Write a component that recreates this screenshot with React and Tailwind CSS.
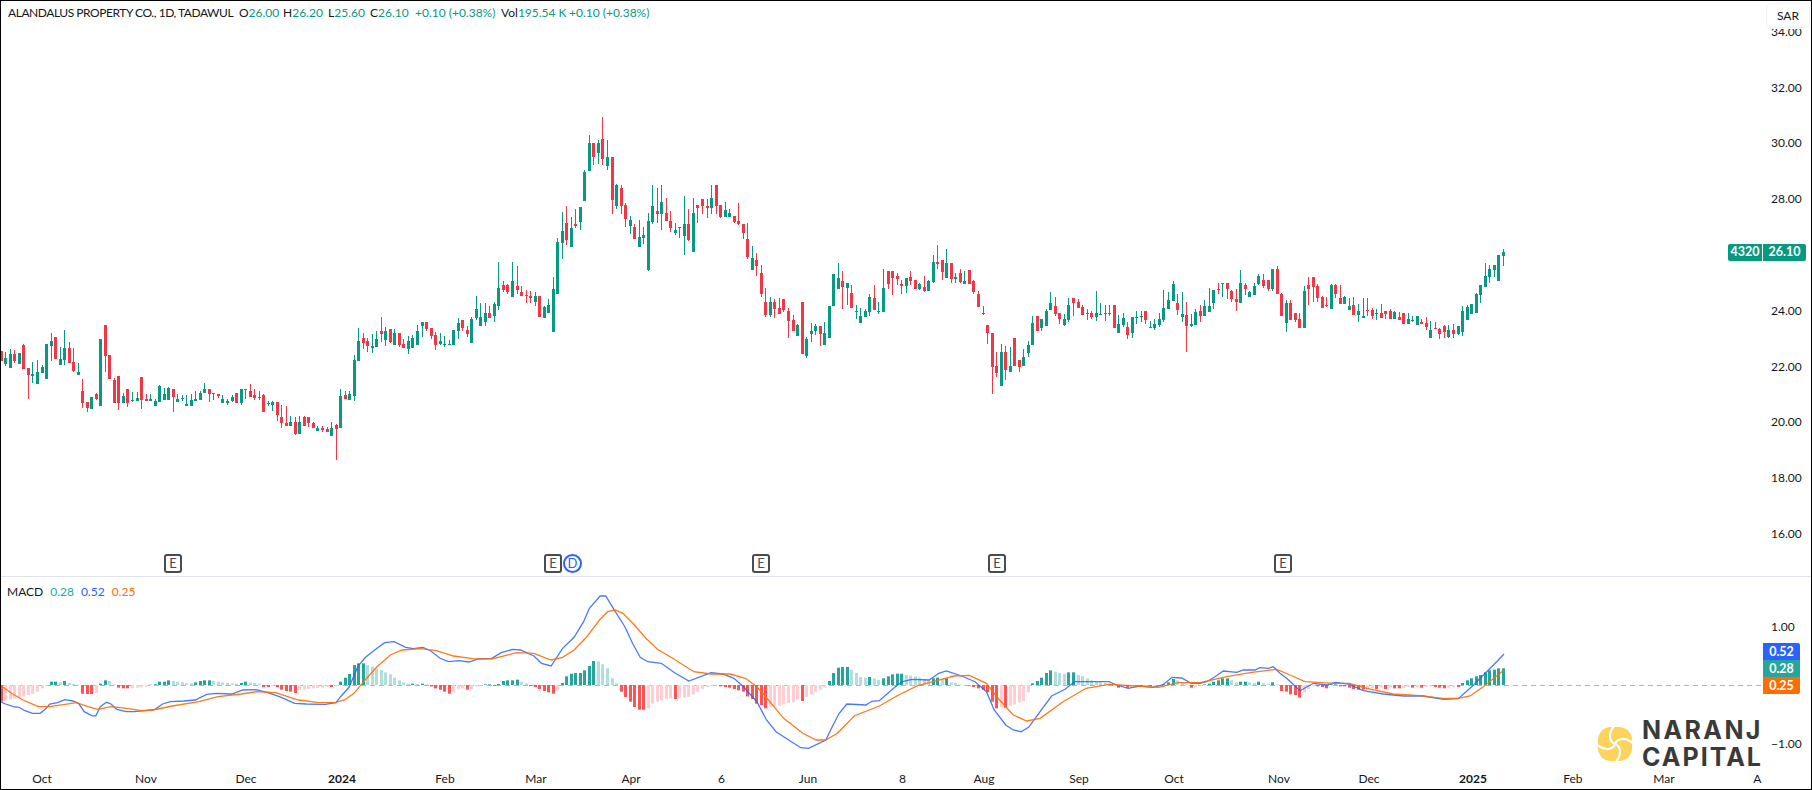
import React from "react"

const GREEN = "#089981"
const RED = "#f23645"

// candles read per crop: colour+bodyTop,bodyBottom,high,low (3x zoomed, missing wick = body edge)
const SECTIONS = [
  [270, "r243,273 g264,282,246,288 g252,294,237 r252,273,240,279 g249,282 r225,297,222 r294,315,,387 g312,318,276,339 g306,342,270 g291,309,285 g222,327 g213,228,189,273 r201,267 g267,285,231 g234,270,180,285 r234,279,216 r276,303,234,306 g306,315,279 r363,399,327,414 r396,414,,426 g381,417 r372,387,369,390 g207,408 r165,258,,306 r255,327 r330,399,324 r318,399,,420 g378,399,369 r357,399,,411 g390,393,366,396 g384,393,366 r321,390,,417 r387,393,372 g387,393,372 g393,408,387 g348,396,345 g372,390,354 g354,390,351 r357,381,,426 g387,396,372 g384,387,375,393 g402,408,375 g390,408,372 g387,393,363 g369,390,363 g357,369,339 r357,372,,396 g369,372,,390 r372,378,,384 g387,399,375 g393,399,387,405 g381,393,375,396 r369,399 g357,399,,405 r357,360,,387 r363,381,342 r375,384,357,390 r381,384,363,390 r375,426,372 g399,402,393,408 g396,405,393,423 r396,435,,453 r441,459,405,474 r459,468,408 g456,468,438 r456,492,441,495 g456,492,438 r441,468,438 r441,459,,471 r459,474,456 g474,483,468 r474,480,468,486 r477,486,471 g474,498,456 r465,477,462,570 g378,474,357 r375,387,363 g372,390,363 g270,378,255,393 g213,273,174 r204,219,189,237 r213,228,204,246 g228,234,192,249 g207,231,183 r183,192,141,216 g183,210,171,228 r177,216,,219 g189,225,177 r189,225,,231"],
  [100, "r732,744,717 g723,747,708,762 g714,744,705 g693,735,675 g666,678,,711 r666,687,,693 r684,708,,717 r705,735,696,750 g723,732,699,735 g732,735,708,741 g732,735,720 g690,735 g669,693,654,717 r660,684,,693 r690,702,678,711 g657,729,651 g627,654,588,660 g651,678,609 g639,666,609,678 r639,654,618 g612,648,606,666 g564,618,486,630 r555,570,543,576 r555,576,552,582 g543,591,486 r558,570,498,582 r576,588,558 r585,588,570,609 r588,594,573,609 g588,606,576,618 r588,651 g621,654,618 g615,639,597 g567,696,531 g426,582,414 g393,429,336,477 r369,420,318,435 g384,441,351 r372,378,327,384 g321,366,,390 g216,303,210 g129,213,105 r129,171,,195 g129,159,120,192 r117,177,51,195 g171,198,120,210 r171,300,,342 g255,318,252,327 r264,318,255,342 r315,357,309,381 g360,378,348,402 r381,417,372 g411,441,360 g405,414,381,432 g363,510,339,513 g318,366,255,372 r333,342,264,369 g306,342,255,390 r339,363,294 r363,384,333,396 g390,399,369,405 g381,384,,414 g372,408,288,465 r372,420,327,423 g339,456,294 r315,324,,369 r297,318,,342 r318,324,297,354 g294,324,255,342 r255,318,,342 r315,351,,354 g330,351,306 g339,351,327 r348,366,,369 r363,372,309,375 r372,399,,417 r417,471,369,477 g474,510,438 r480,498,459,528 r519,582,495,591 r606,645,564,651 g606,645,591,651 r606,627,597,654 r624,642,594 r597,630,,636 r633,663,624,714 r660,693,645 g675,708,672"],
  [220, "r246,402 g357,408,351,414 g333,342,309,366 g318,333,312,345 r318,342,,378 g339,375,306 g258,354 g162,258 g174,207,129 r183,201,153,267 g189,204,,255 r219,264,195 g273,276,255,297 g288,309,264 g273,291,267 g231,276,222,288 r234,270,195 g273,276,246,282 g204,276,147 r153,192,,207 r153,174,,225 r168,177,159,195 r192,198,180,222 g174,198,,219 r171,183,153,195 r180,207 g192,207,189,210 r201,213,168,216 g183,213,180 g126,186,105,189 r126,132,75,147 r120,156,,180 g129,174,87 r129,177,,189 g171,177,159,189 r159,186,147,189 g183,192,153 r150,192 r183,216,180,222 r222,261,213 g279,282,258,285 r315,339,,372 r339,441,,522 r438,459,396,471 g396,498,372 r396,450,378,480 g438,456,381 r354,438 r420,441,,456 g411,438,387 g375,399,363,411 g309,375,288 r288,333 g297,324,,333 g273,318,267 g249,270,216 r258,282,231,288 r279,297,,312 g297,315,282,318 g255,300,234,306 r234,249,,288 r246,264,237 r261,285,255 r279,282,267,300 r279,291,273,297 g279,291,213,303 g282,285,249 g279,282,255,303 r279,282,255,288 r255,324 g312,339,285 g294,315,279,321 r321,345,306,357 g291,339,,354 g291,294,273,312 g288,291,273,306 r273,300,,312 g321,324,303 g312,324,297,330 g297,315,279,321 g264,300,210,306 g240,267,216 g192,243,183 r249,270,222,285 g282,291,216,306 r285,318,246,396 g312,318,282,321 g276,315,267"],
  [230, "r243,258,225,276 g228,258,210 g228,246,174 g180,219,,237 r177,180,159,192 g159,162,,201 r159,177,,207 r183,207,180,216 r207,216,177,243 g159,219,120 r165,177,159,195 g186,201,183 g168,195,159 g138,162,132,165 r150,168,132,174 r150,177,,183 g117,177,,183 r117,192,108 r192,258,189 g219,279,210,306 r219,270,210 r249,270,,276 r267,294,249 g183,294,168 r165,177,141,225 r141,171,,216 r168,204,162,216 r201,234,198 r225,228,201,231 g165,237,162 r165,192,162,204 r204,222,165 g201,222,198 g228,240,204 r225,255,201 g243,255,222,276 g258,264,204 r240,243,204,258 r240,258,234,267 g249,252,237,270 r249,264,222 r243,252,,267 r243,267,237 g246,267,243 r261,270,246 r249,282 g267,282,249 g270,273,258,276 g258,285 r276,282,267 r279,291,261,300 g300,324,273 r294,297,276 r297,312,294,327 r288,306,285,324 g300,321,285,324 r300,312,282,324 g288,312,,315 g243,306,228,318 g231,270,225 g222,252 g192,249,189 g165,195,,219 g138,171,99 g117,141,105,159 g105,120,,141 g75,153 g66,78,57,108"],
]

const CANDLES = SECTIONS.flatMap(([off, s]) =>
  s.split(" ").map((t) => {
    const [top, bot, hi, lo] = t.slice(1).split(",").map(Number)
    return {
      color: t[0] === "g" ? GREEN : RED,
      top: off + top / 3,
      bot: off + bot / 3,
      hi: off + (hi || top) / 3,
      lo: off + (lo || bot) / 3,
    }
  })
)

const PITCH = 4.524
const barX = (i) => Math.round(1.3 + PITCH * i - 1.5)

// histogram heights per bar (3x zoomed, zero = 685)
const HIST = [
  -50,-47,-44,-41,-38,-34,-30,-27,-20,-10,-2,10,10,8,12,6,3,1,-26,-27,-27,-24,4,14,12,2,-8,-10,-10,-9,-8,-6,-5,1,2,
  10,10,14,12,10,8,6,5,8,12,14,14,12,10,8,6,5,4,6,10,8,6,4,-6,-6,-4,-6,-14,-18,-20,-24,-16,-14,-12,-10,-9,-8,-6,-6,-4,
  10,22,33,60,65,65,60,55,50,45,38,32,22,14,8,4,4,3,4,2,-4,-10,-14,-20,-26,-20,-12,-10,-14,-12,-4,-2,2,2,-3,3,
  12,14,14,16,10,5,-3,-6,-12,-18,-22,-26,-16,6,26,34,36,36,44,57,72,71,62,50,20,5,-20,
  -36,-50,-66,-74,-74,-70,-56,-50,-46,-42,-40,-42,-40,-38,-36,-28,-20,-12,-6,-3,-1,-4,-6,-8,-12,-16,-20,-34,-42,-56,-60,-70,
  -66,-64,-62,-58,-54,-52,-44,-48,-36,-28,-20,-14,-8,12,36,52,54,54,46,36,24,22,24,20,16,20,26,32,34,34,30,28,26,22,18,16,20,22,18,20,8,6,2,0,
  -2,-6,-10,-14,-22,-50,-70,-66,-68,-62,-58,-52,-48,-22,5,12,22,36,44,40,36,34,38,38,30,26,20,14,10,8,6,
  4,3,-8,-2,-8,-2,-3,-4,-2,-4,-3,-2,2,8,18,14,8,2,-8,-6,-4,2,4,10,14,20,20,14,8,10,10,8,6,10,6,4,8,2,
  -18,-20,-28,-30,-38,-22,-12,-4,-4,-6,-10,2,2,-4,-4,-8,-12,-14,-14,-12,-10,-12,-8,-12,-8,-10,-10,-8,-6,-8,-6,-8,-6,-4,-6,-8,-10,-8,-6,-6,
  6,14,20,26,30,38,44,46,50,50,
]

const histColor = (v, prev) => {
  if (v >= 0) return v >= prev ? "#26a69a" : "#b2dfdb"
  return v <= prev ? "#ff5252" : "#ffcdd2"
}

// line points per crop: [x scale, x offset, y offset, "z,z z,z ..."]
const toPoints = (parts) =>
  parts
    .flatMap(([sx, ox, oy, s]) =>
      s.split(" ").map((p) => {
        const [x, y] = p.split(",").map(Number)
        return `${(ox + x / sx).toFixed(1)},${(oy + y / 3).toFixed(1)}`
      })
    )
    .join(" ")

const MACD_LINE = toPoints([
  [2.613, 0, 550, "0,455 15,462 35,470 50,472 65,482 85,490 105,490 118,478 130,462 150,458 170,449 190,453 205,460 220,485 240,497 250,498 262,470 278,457 290,462 305,478 330,485 350,485 380,482 405,478 425,462 445,455 480,453 510,450 540,433 565,430 605,432 635,420 670,419 700,428 730,440 770,460 800,462 850,463 878,458 890,440 912,412 935,350 955,322 985,295 1005,278 1030,275 1060,292 1080,296 1105,292 1125,302 1150,325 1172,335 1200,332 1225,336 1250,327 1285,325 1310,308 1340,298 1360,300 1395,318 1415,340 1440,348 1470,295 1500,262 1525,215 1540,175 1568,138"],
  [2.613, 600, 550, "15,138 40,185 65,230 85,280 105,322 125,335 160,340 195,368 232,393 290,368 320,372 350,385 375,410 410,455 435,510 460,545 500,575 525,593 545,595 590,570 605,535 625,490 645,462 695,465 710,454 730,452 770,412 790,395 815,388 860,390 885,370 905,363 945,378 980,395 1010,425 1030,480 1060,525 1080,540 1100,545 1120,532 1150,485 1180,438 1215,418 1240,395 1330,395 1350,405 1380,415 1410,408 1445,412 1470,405 1495,382 1520,384 1545,400 1568,400"],
  [3, 1100, 620, "320,185 345,170 370,153 410,157 430,150 465,150 480,143 505,145 520,140 540,160 560,175 600,212 640,190 680,195 705,187 745,192 790,212 850,222 910,228 970,228 1030,238 1075,236 1120,196 1160,155 1190,125 1212,102"],
])

const SIGNAL_LINE = toPoints([
  [2.613, 0, 550, "0,405 30,430 60,450 100,470 130,470 170,463 200,458 230,470 255,478 290,470 330,475 370,482 400,480 450,468 520,455 570,440 630,432 670,425 720,428 780,450 830,457 875,458 900,450 925,430 950,395 985,350 1020,315 1050,300 1100,296 1140,302 1185,318 1235,326 1285,327 1350,308 1395,310 1440,330 1470,322 1500,300 1530,265 1568,208"],
  [2.613, 600, 550, "20,185 40,180 60,190 90,225 120,265 150,298 190,325 245,365 290,372 340,372 380,385 410,410 440,450 480,505 530,550 565,570 590,570 620,550 665,497 730,468 780,435 830,407 880,392 925,378 965,376 1010,400 1040,445 1080,495 1115,513 1150,505 1210,455 1270,415 1330,403 1400,408 1460,412 1510,398 1568,398"],
  [3, 1100, 620, "380,170 450,158 530,148 570,165 615,185 700,190 750,190 800,205 880,222 960,227 1030,235 1075,235 1110,228 1150,200 1212,150"],
])

const TICKS = [
  ["Oct", 41], ["Nov", 145], ["Dec", 245], ["2024", 341, true], ["Feb", 444], ["Mar", 535], ["Apr", 630],
  ["6", 720.5], ["Jun", 807], ["8", 901.6], ["Aug", 983], ["Sep", 1078], ["Oct", 1173], ["Nov", 1278],
  ["Dec", 1368], ["2025", 1472, true], ["Feb", 1572], ["Mar", 1663], ["Apr", 1762],
]

const PRICES = ["34.00", "32.00", "30.00", "28.00", "", "24.00", "22.00", "20.00", "18.00", "16.00"]

function Candles() {
  return (
    <svg className="block w-full h-full" viewBox="1 1 1761 575">
      {CANDLES.map((c, i) => (
        <g key={i} fill={c.color}>
          <rect x={barX(i) + 1} y={c.hi} width="1" height={c.lo - c.hi} />
          <rect x={barX(i)} y={c.top} width="3" height={c.bot - c.top} />
        </g>
      ))}
    </svg>
  )
}

function Macd() {
  let prev = 0
  return (
    <svg className="block w-full h-full" viewBox="1 577 1762 192">
      <line x1="1" x2="1763" y1="685.5" y2="685.5" stroke="#b2b5be" strokeDasharray="5 4" />
      {HIST.map((v, i) => {
        const color = histColor(v, prev)
        prev = v
        const h = Math.abs(v) / 3
        return <rect key={i} x={barX(i)} y={v >= 0 ? 685 - h : 685} width="3" height={h} fill={color} />
      })}
      <polyline points={MACD_LINE} fill="none" stroke="#2962ff" strokeWidth="1.3" opacity="0.85" />
      <polyline points={SIGNAL_LINE} fill="none" stroke="#ff6d00" strokeWidth="1.3" opacity="0.9" />
    </svg>
  )
}

function Marker({ className, children }) {
  return (
    <div className={`absolute top-[553px] w-[18px] h-[19px] flex items-center justify-center bg-white border-2 border-[#4a4a50] rounded-[3px] text-[13px] text-[#4a4a50] ${className}`}>
      {children}
    </div>
  )
}

// white spiral gap between two petals, repeated four times round the centre
const GAP = "M17 17.500 C11 14 10 7 16 -1"

function Logo() {
  return (
    <div className="absolute left-[1597px] top-[140px] flex items-center gap-[10px]">
      <svg width="34" height="34" viewBox="0 0 34 34">
        <rect width="34" height="34" rx="13" fill="#fdd35c" />
        <g fill="none" stroke="#ffffff" strokeWidth="2.2">
          <path d={GAP} />
          <path d={GAP} transform="rotate(90 17 17)" />
          <path d={GAP} transform="rotate(180 17 17)" />
          <path d={GAP} transform="rotate(270 17 17)" />
        </g>
      </svg>
      <div className="font-['Inter',sans-serif] font-bold text-[#3a3a3a] text-[25px] leading-[27px] tracking-[2.4px]">
        <div>NARANJ</div>
        <div className="tracking-[2px]">CAPITAL</div>
      </div>
    </div>
  )
}

export default function App() {
  return (
    <div className="w-[1812px] h-[790px] flex flex-col overflow-hidden bg-white border border-black font-['Lato',sans-serif] text-[#131722]">
      <div className="relative flex h-[575px] shrink-0">
        <div className="w-[1761px] shrink-0">
          <Candles />
        </div>
        <div className="flex-1 pt-[3px] pl-[9px] text-[12px]">
          {PRICES.map((p, i) => (
            <div key={i} className="h-[55.8px] flex items-center">{p}</div>
          ))}
        </div>

        <div className="absolute left-[7px] top-[5px] flex items-center h-[14px] text-[12px] text-[#089981] whitespace-nowrap">
          <span className="w-[231px] text-[#131722] tracking-[-0.45px]">ALANDALUS PROPERTY CO., 1D, TADAWUL</span>
          <span className="w-[44px]"><span className="text-[#131722]">O</span>26.00</span>
          <span className="w-[45px]"><span className="text-[#131722]">H</span>26.20</span>
          <span className="w-[42px]"><span className="text-[#131722]">L</span>25.60</span>
          <span className="w-[45px]"><span className="text-[#131722]">C</span>26.10</span>
          <span className="w-[86px]">+0.10 (+0.38%)</span>
          <span className="w-[68px]"><span className="text-[#131722]">Vol</span>195.54 K</span>
          <span>+0.10 (+0.38%)</span>
        </div>

        <div className="absolute left-[1761px] top-0 w-[49px] h-[28px] bg-white" />
        <div className="absolute left-[1765px] top-[2px] w-[44px] h-[25px] flex items-center justify-center bg-white border border-[#f0f3fa] rounded-[4px] text-[12px]">
          SAR
        </div>

        <div className="absolute left-[1727px] top-[243px] flex gap-px text-[12.5px] font-bold text-white">
          <div className="w-[34px] h-[17px] flex items-center justify-center bg-[#089981] rounded-l-[2px]">4320</div>
          <div className="w-[43px] h-[17px] flex items-center justify-center bg-[#089981] rounded-r-[2px]">26.10</div>
        </div>

        <Marker className="left-[163px]">E</Marker>
        <Marker className="left-[543px]">E</Marker>
        <div className="absolute left-[562px] top-[553px] w-[19px] h-[19px] flex items-center justify-center bg-white border-2 border-[#2962ff] rounded-full text-[13px] text-[#2962ff]">
          D
        </div>
        <Marker className="left-[751px]">E</Marker>
        <Marker className="left-[987px]">E</Marker>
        <Marker className="left-[1273px]">E</Marker>
      </div>

      <div className="h-px shrink-0 bg-[#e0e3eb]" />

      <div className="relative flex h-[192px] shrink-0">
        <div className="w-[1762px] shrink-0">
          <Macd />
        </div>
        <div className="flex-1 pl-[8px] text-[12px] leading-[16px]">
          <div className="h-[58px] flex items-end">1.00</div>
          <div className="mt-[101px]">−1.00</div>
        </div>

        <div className="absolute left-[6px] top-[7px] flex gap-[7px] text-[12px] h-[16px] items-center">
          <span>MACD</span>
          <span className="text-[#26a69a]">0.28</span>
          <span className="text-[#2962ff]">0.52</span>
          <span className="text-[#ff6d00]">0.25</span>
        </div>

        <div className="absolute left-[1762px] top-[66px] w-[37px] text-[12.5px] font-bold text-white text-center leading-[17px]">
          <div className="bg-[#2962ff] rounded-tr-[2px]">0.52</div>
          <div className="bg-[#26a69a]">0.28</div>
          <div className="bg-[#ff6d00] rounded-br-[2px]">0.25</div>
        </div>

        <Logo />
      </div>

      <div className="flex h-[20px] w-[1761px] overflow-hidden items-center text-[12px]">
        {TICKS.map(([label, center, bold], i) => {
          // cells are sized so each label's centre lands on its tick
          const start = TICKS.slice(0, i).reduce((acc, t) => 2 * t[1] - acc, 0)
          return (
            <div
              key={i}
              className={`shrink-0 text-center whitespace-nowrap ${bold ? "font-bold" : ""}`}
              style={{ width: 2 * (center - start) }}
            >
              {label}
            </div>
          )
        })}
      </div>
    </div>
  )
}
